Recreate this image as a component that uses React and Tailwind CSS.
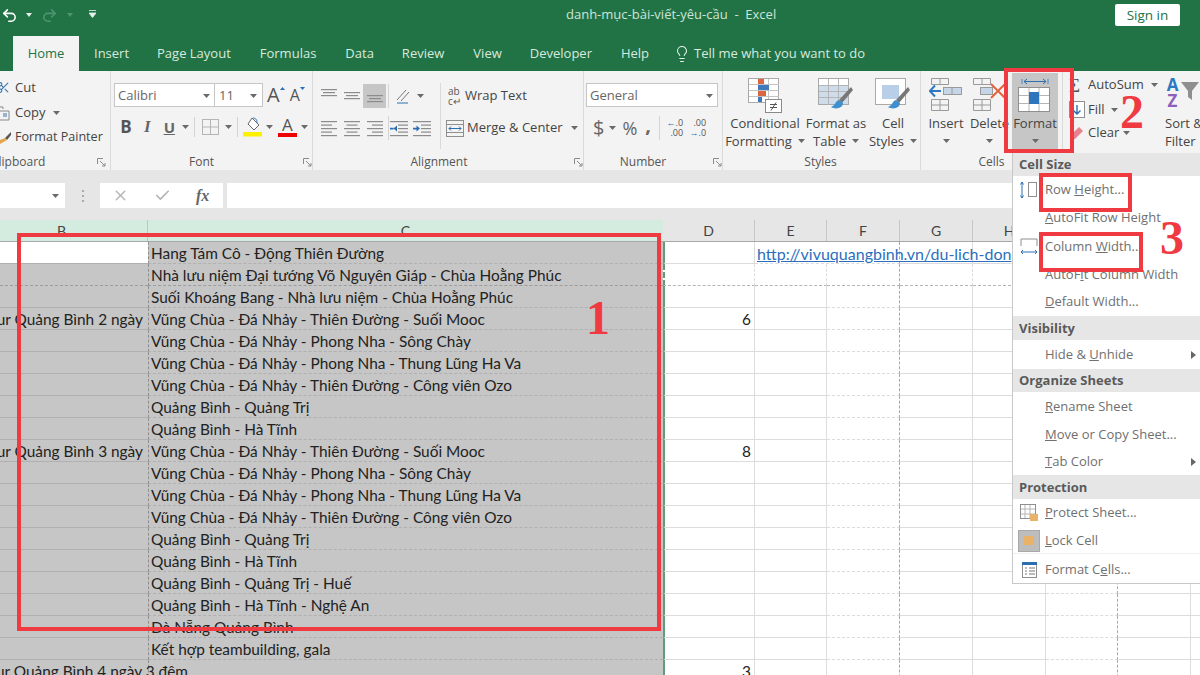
import { Undo2, Redo2, Lightbulb, X, Check, Scissors } from 'lucide-react'

const UI = "font-['Open_Sans',sans-serif]"
const CELL = "font-['Lato',sans-serif]"

const TABS = [
  ['Insert', 'ml-[15px]'], ['Page Layout', 'ml-[28px]'], ['Formulas', 'ml-[29px]'], ['Data', 'ml-[29px]'],
  ['Review', 'ml-[28px]'], ['View', 'ml-[29px]'], ['Developer', 'ml-[28px]'], ['Help', 'ml-[29px]'],
]

const V1 = 'Vũng Chùa - Đá Nhảy - Thiên Đường - Suối Mooc'
const V2 = 'Vũng Chùa - Đá Nhảy - Phong Nha - Sông Chày'
const V3 = 'Vũng Chùa - Đá Nhảy - Phong Nha - Thung Lũng Ha Va'
const V4 = 'Vũng Chùa - Đá Nhảy - Thiên Đường - Công viên Ozo'

const ROWS = [
  { c: 'Hang Tám Cô - Động Thiên Đường', link: true },
  { c: 'Nhà lưu niệm Đại tướng Võ Nguyên Giáp - Chùa Hoằng Phúc', dashed: true },
  { c: 'Suối Khoáng Bang - Nhà lưu niệm - Chùa Hoằng Phúc' },
  { b: 'Tour Quảng Bình 2 ngày', c: V1, d: 6 },
  { c: V2 }, { c: V3 }, { c: V4 },
  { c: 'Quảng Bình - Quảng Trị' },
  { c: 'Quảng Bình - Hà Tĩnh' },
  { b: 'Tour Quảng Bình 3 ngày', c: V1, d: 8 },
  { c: V2 }, { c: V3 }, { c: V4 },
  { c: 'Quảng Bình - Quảng Trị' },
  { c: 'Quảng Bình - Hà Tĩnh' },
  { c: 'Quảng Bình - Quảng Trị - Huế' },
  { c: 'Quảng Bình - Hà Tĩnh - Nghệ An' },
  { c: 'Đà Nẵng Quảng Bình' },
  { c: 'Kết hợp teambuilding, gala' },
  { b: 'Tour Quảng Bình 4 ngày 3 đêm', c: '', d: 3, spill: true },
]

function Caret({ className = '' }) {
  return (
    <svg width="7" height="4" viewBox="0 0 7 4" className={`shrink-0 ${className}`}>
      <path d="M0 0h7L3.5 4z" fill="#6a6a6a" />
    </svg>
  )
}

function Launcher({ className }) {
  return (
    <svg width="9" height="9" viewBox="0 0 9 9" className={`absolute bottom-[3px] ${className}`} fill="none" stroke="#8a8a8a">
      <path d="M.5 6V.5H6M3 3l5 5M5 8h3V5" />
    </svg>
  )
}

function Sep({ className = '' }) {
  return <div className={`w-px h-[24px] bg-[#d4d4d4] shrink-0 ${className}`} />
}

function Lines({ kind }) {
  const rows = {
    left: [[0, 16], [0, 11], [0, 16], [0, 11], [0, 16]],
    center: [[0, 16], [2.5, 11], [0, 16], [2.5, 11], [0, 16]],
    right: [[0, 16], [5, 11], [0, 16], [5, 11], [0, 16]],
  }[kind]
  return (
    <svg width="16" height="17" viewBox="0 0 16 17">
      {rows.map(([x, w], i) => <rect key={i} x={x} y={i * 3.5 + 1} width={w} height="1.2" fill="#8c8c8c" />)}
    </svg>
  )
}

function VAlign({ y }) {
  return (
    <svg width="16" height="16" viewBox="0 0 16 16">
      <rect x="0" y={y} width="16" height="1.2" fill="#8c8c8c" />
      <rect x="2" y={y + 3} width="12" height="1.2" fill="#8c8c8c" />
      <rect x="0" y={y + 6} width="16" height="1.2" fill="#8c8c8c" />
    </svg>
  )
}

function Indent({ flip }) {
  return (
    <svg width="18" height="17" viewBox="0 0 18 17">
      {[1, 4.5, 8, 11.5, 15].map((y, i) => <rect key={i} x={i === 0 || i === 4 ? 0 : 8} y={y} width={i === 0 || i === 4 ? 18 : 10} height="1.2" fill="#8c8c8c" />)}
      <path d={flip ? 'M7 5.5L3.5 8.5 7 11.5zM3.5 7.8H0v1.6h3.5' : 'M3.5 5.5L7 8.5 3.5 11.5zM3.5 7.8H0v1.6h3.5'} fill="#2b6fb3" />
    </svg>
  )
}

function BigIcon({ kind }) {
  if (kind === 'cond') {
    return (
      <svg width="34" height="36" viewBox="0 0 34 36">
        <rect x=".5" y=".5" width="30" height="24" fill="#fff" stroke="#a9a9a9" />
        <path d="M10.5 1v24M20.5 1v24M1 6.5h30M1 12.5h30M1 18.5h30" stroke="#c4c4c4" />
        <rect x="10" y="1" width="6" height="5" fill="#d9663f" />
        <rect x="10" y="7" width="11" height="5" fill="#3f78bd" />
        <rect x="10" y="13" width="8" height="5" fill="#d9663f" />
        <rect x="10" y="19" width="4" height="5" fill="#3f78bd" />
        <rect x="17.5" y="21.5" width="16" height="13" fill="#fff" stroke="#8a8a8a" />
        <path d="M22 26.5h7M22 29.5h7M28 24.5l-5 8" stroke="#555" />
      </svg>
    )
  }
  if (kind === 'table') {
    return (
      <svg width="36" height="34" viewBox="0 0 36 34">
        <rect x=".5" y=".5" width="30" height="26" fill="#cfdcec" stroke="#a9a9a9" />
        <rect x="1" y="1" width="29" height="6" fill="#fff" />
        <path d="M10.5 1v26M20.5 1v26M1 7.5h30M1 13.5h30M1 19.5h30" stroke="#b5b5b5" />
        <path d="M33 9L21 22l3 3L35 12z" fill="#777" />
        <path d="M21 22c-4 1-3 5-8 7 5 3 12 1 12-4z" fill="#3f8ed0" />
      </svg>
    )
  }
  if (kind === 'style') {
    return (
      <svg width="36" height="34" viewBox="0 0 36 34">
        <rect x=".5" y=".5" width="30" height="26" fill="#fff" stroke="#a9a9a9" />
        <rect x="7" y="7" width="17" height="14" fill="#b9cfe8" />
        <path d="M33 9L21 22l3 3L35 12z" fill="#777" />
        <path d="M21 22c-4 1-3 5-8 7 5 3 12 1 12-4z" fill="#3f8ed0" />
      </svg>
    )
  }
  if (kind === 'insert') {
    return (
      <svg width="34" height="34" viewBox="0 0 34 34" fill="none">
        <path d="M2.5.5h17v6h-17zM11 .5v6M2.5 21.5h17v11h-17zM2.5 27h17M11 21.5v11" stroke="#9a9a9a" />
        <rect x="14.5" y="9.5" width="18" height="7" fill="#c5d6e8" stroke="#9a9a9a" />
        <path d="M23 10v6" stroke="#9a9a9a" />
        <path d="M12 13H1M6 7.5L.8 13 6 18.5" stroke="#2b79c2" strokeWidth="2" />
      </svg>
    )
  }
  if (kind === 'delete') {
    return (
      <svg width="34" height="34" viewBox="0 0 34 34" fill="none">
        <path d="M.5.5h17v6H.5zM9 .5v6M.5 21.5h17v11H.5zM.5 27h17M9 21.5v11" stroke="#9a9a9a" />
        <rect x="7.5" y="9.5" width="12" height="7" fill="#c5d6e8" stroke="#9a9a9a" />
        <path d="M18 6l14 14M32 6L18 20" stroke="#e0643c" strokeWidth="2" />
      </svg>
    )
  }
  return (
    <svg width="34" height="36" viewBox="0 0 34 36" fill="none">
      <path d="M4 1v5M30 1v5" stroke="#4a86c5" />
      <path d="M6 3.5h22M9 1l-3 2.500 3 2.500M25 1l3 2.500-3 2.500" stroke="#2b6fb3" />
      <rect x=".5" y="9.500" width="31" height="24" fill="#fff" stroke="#8f8f8f" />
      <path d="M11 10v23M21 10v23M1 17.500h30M1 25.500h30" stroke="#b5b5b5" />
      <rect x="11" y="14" width="10" height="12" fill="#2f75bd" />
    </svg>
  )
}

function BigButton({ icon, first, second, className = '' }) {
  return (
    <div className={`flex flex-col items-center shrink-0 ${className}`}>
      <div className="h-[43px] pt-[7px] flex justify-center"><BigIcon kind={icon} /></div>
      <div className="leading-[18px] whitespace-nowrap">{first}</div>
      <div className="leading-[18px] h-[18px] whitespace-nowrap flex items-center gap-[6px]">
        {second}
        <Caret />
      </div>
    </div>
  )
}

function Group({ label, width, children, launcher, labelClass = '' }) {
  return (
    <div className={`relative flex flex-col shrink-0 h-full border-r border-[#dadada] ${width}`}>
      <div className="flex-1 min-h-0">{children}</div>
      <div className={`h-[20px] leading-[24px] text-center text-[12px] text-[#555] ${labelClass}`}>{label}</div>
      {launcher && <Launcher className={launcher} />}
    </div>
  )
}

function MenuHeader({ children, className }) {
  return <div className={`flex items-center pl-[6px] bg-[#e6e6e6] font-bold text-[#5a5a5a] text-[13px] ${className}`}>{children}</div>
}

function MenuItem({ children, icon, arrow, className }) {
  return (
    <div className={`flex items-center text-[#707070] text-[13px] ${className}`}>
      <div className="w-[32px] flex justify-center shrink-0">{icon}</div>
      <div className="flex-1 whitespace-nowrap">{children}</div>
      {arrow && (
        <svg width="5" height="8" viewBox="0 0 5 8" className="mr-[4px]"><path d="M0 0l5 4-5 4z" fill="#666" /></svg>
      )}
    </div>
  )
}

function SheetRow({ row, index }) {
  const selected = index > 0
  const bBg = selected ? 'bg-[#c6c6c6]' : 'bg-white'
  const line = row.dashed ? 'border-b border-dashed border-b-[#9c9c9c]' : 'border-b border-b-[#b0b0b0]'
  const right = row.dashed ? 'border-b border-dashed border-b-[#b5b5b5]' : 'border-b border-b-[#dcdcdc]'
  return (
    <div className={`flex h-[22px] shrink-0 text-[15.4px] text-[#222] ${CELL}`}>
      <div className={`w-[148px] shrink-0 flex justify-end items-center pt-[2px] whitespace-nowrap ${bBg} ${line} ${row.spill ? '' : 'pr-[5px]'}`}>
        <span className={row.spill ? 'relative left-[40px]' : ''}>{row.b}</span>
      </div>
      <div className={`w-[515px] shrink-0 flex items-center pt-[2px] pl-[2px] whitespace-nowrap bg-[#c6c6c6] border-l border-dashed border-l-[#8f8f8f] ${line}`}>{row.c}</div>
      <div className={`w-[92px] shrink-0 flex justify-end items-center pt-[2px] pr-[3px] bg-white border-l-2 border-l-[#5f9c7c] border-r border-r-[#dcdcdc] ${right}`}>{row.d}</div>
      {row.link ? (
        <div className={`w-[145px] shrink-0 bg-white border-r border-dashed border-r-[#a8a8a8] ${right} flex items-center pt-[2px]`}>
          <span className="pl-[2px] underline text-[16px] text-[#2b6fbd] whitespace-nowrap relative">http://vivuquangbinh.vn/du-lich-don</span>
        </div>
      ) : (
        <>
          <div className={`w-[72px] shrink-0 bg-white border-r border-r-[#dcdcdc] ${right}`} />
          <div className={`w-[73px] shrink-0 bg-white border-r border-dashed border-r-[#a8a8a8] ${right}`} />
        </>
      )}
      <div className={`w-[73px] shrink-0 bg-white border-r border-r-[#dcdcdc] ${right}`} />
      <div className={`w-[73px] shrink-0 bg-white border-r border-r-[#dcdcdc] ${right}`} />
      <div className={`w-[72px] shrink-0 bg-white border-r border-dashed border-r-[#a8a8a8] ${right}`} />
      <div className={`w-[73px] shrink-0 bg-white border-r border-r-[#dcdcdc] ${right}`} />
      <div className={`flex-1 bg-white ${right}`} />
    </div>
  )
}

export default function App() {
  return (
    <div className={`relative w-[1200px] h-[675px] overflow-hidden bg-white ${UI}`}>
      {/* title bar + tabs */}
      <div className="h-[71px] bg-[#217346] flex flex-col">
        <div className="h-[36px] flex items-center pb-[6px]">
          <Undo2 size={17} strokeWidth={2.2} className="text-white ml-[1px]" />
          <svg width="6" height="4" viewBox="0 0 6 4" className="ml-[8px]"><path d="M0 0h6L3 4z" fill="#e8f1ec" /></svg>
          <Redo2 size={17} strokeWidth={2.2} className="text-[#4f9470] ml-[9px]" />
          <svg width="6" height="4" viewBox="0 0 6 4" className="ml-[9px]"><path d="M0 0h6L3 4z" fill="#4f9470" /></svg>
          <svg width="7" height="8" viewBox="0 0 7 8" className="ml-[16px] -mt-[3px]"><path d="M0 .5h7M0 3h7L3.500 7.500z" stroke="#e8f1ec" fill="#e8f1ec" strokeWidth=".8" /></svg>
          <div className="ml-[470px] text-[13px] text-[#cfe3d7] whitespace-pre">danh-mục-bài-viết-yêu-cầu  -  Excel</div>
          <div className="ml-auto mr-[20px] w-[65px] h-[22px] bg-white rounded-[2px] flex items-center justify-center text-[13.5px] text-[#217346]">Sign in</div>
        </div>
        <div className="h-[35px] flex items-center text-[13px] text-[#d8e9df] whitespace-nowrap">
          <div className="ml-[13px] w-[66px] h-full bg-[#f3f3f3] text-[#217346] flex items-center justify-center">Home</div>
          {TABS.map(([name, ml]) => <div key={name} className={ml}>{name}</div>)}
          <Lightbulb size={18} strokeWidth={1.4} className="ml-[24px] text-[#e8f1ec]" />
          <div className="ml-[3px]">Tell me what you want to do</div>
        </div>
      </div>

      {/* ribbon */}
      <div className="h-[99px] bg-[#f3f3f3] flex text-[13px] text-[#444] whitespace-nowrap">
        <Group label={<span className="relative -left-[33px]">lipboard</span>} width="w-[111px]" launcher="left-[97px]">
          <div className="pt-[4px] flex flex-col">
            <div className="h-[25px] flex items-center"><Scissors size={13} className="ml-[-3px] mr-[5px] text-[#3a76b0]" />Cut</div>
            <div className="h-[25px] flex items-center">
              <svg width="10" height="16" viewBox="0 0 10 16" fill="none" className="mr-[5px]"><path d="M0 2h3v2M0 6h9v9H0" stroke="#8a8a8a" /><path d="M3 9h4M3 11h4" stroke="#3a76b0" /></svg>
              Copy<Caret className="ml-[8px]" />
            </div>
            <div className="h-[25px] flex items-center text-[12.6px]">
              <svg width="11" height="14" viewBox="0 0 11 14" className="mr-[4px]"><path d="M11 1L5 7l2 2 4-5z" fill="#555" /><path d="M5 7l-5 2v4l7-4z" fill="#e5a64b" /></svg>
              Format Painter
            </div>
          </div>
        </Group>

        <Group label="Font" labelClass="pr-[20px]" width="w-[202px]" launcher="left-[192px]">
          <div className="pl-[3px] pt-[12px] flex items-center">
            <div className="w-[101px] h-[24px] pt-[2px] bg-white border border-[#c6c6c6] flex items-center px-[3px] text-[#666]">Calibri<Caret className="ml-auto mr-[1px]" /></div>
            <div className="w-[48px] h-[24px] pt-[2px] bg-white border border-l-0 border-[#c6c6c6] flex items-center px-[4px] text-[#666]">11<Caret className="ml-auto mr-[1px]" /></div>
            <span className="ml-[4px] text-[20px] leading-none text-[#555]">A</span>
            <svg width="5" height="3" viewBox="0 0 5 3" className="-mt-[14px]"><path d="M0 3h5L2.500 0z" fill="#2b6fb3" /></svg>
            <span className="ml-[5px] text-[16px] leading-none text-[#555]">A</span>
            <svg width="5" height="3" viewBox="0 0 5 3" className="-mt-[14px]"><path d="M0 0h5L2.500 3z" fill="#2b6fb3" /></svg>
          </div>
          <div className="mt-[11px] pl-[8px] flex items-center h-[18px]">
            <span className="w-[14px] text-center font-bold text-[17px] text-[#555]">B</span>
            <span className="ml-[11px] font-['Liberation_Serif',serif] italic font-bold text-[17px] text-[#666]">I</span>
            <span className="ml-[13px] underline font-bold text-[15px] text-[#666]">U</span>
            <Caret className="ml-[7px]" />
            <Sep className="ml-[5px] !h-[20px]" />
            <svg width="17" height="16" viewBox="0 0 17 16" fill="none" className="ml-[7px]"><rect x=".5" y=".5" width="16" height="15" stroke="#b5b5b5" /><path d="M8.500 0v16M0 8h17" stroke="#b5b5b5" /></svg>
            <Caret className="ml-[6px]" />
            <Sep className="ml-[5px] !h-[20px]" />
            <svg width="19" height="20" viewBox="0 0 19 20" className="ml-[5px]"><path d="M9 1l7 7-5 5-6-6z" fill="#fff" stroke="#666" /><path d="M10 1c2 0 4 1 4 5" stroke="#2b6fb3" fill="none" /><rect y="15" width="19" height="4.500" fill="#fbf100" /></svg>
            <Caret className="ml-[4px]" />
            <div className="ml-[5px] w-[19px] flex flex-col items-center">
              <span className="text-[17px] leading-[16px] text-[#555]">A</span>
              <div className="w-[19px] h-[4px] bg-[#ef0000]" />
            </div>
            <Caret className="ml-[4px]" />
          </div>
        </Group>

        <Group label="Alignment" labelClass="pr-[18px]" width="w-[271px]" launcher="left-[261px]">
          <div className="flex h-full">
            <div className="w-[128px] border-r border-[#dadada] h-[66px] mt-[12px] pl-[4px]">
              <div className="flex items-center h-[26px]">
                <div className="w-[23px] flex justify-center"><VAlign y={1} /></div>
                <div className="w-[23px] flex justify-center"><VAlign y={4} /></div>
                <div className="w-[23px] h-[24px] bg-[#c6c6c6] flex items-center justify-center"><VAlign y={7} /></div>
                <Sep className="ml-[2px]" />
                <svg width="17" height="16" viewBox="0 0 17 16" fill="none" className="ml-[6px]"><path d="M2 12L11 2M6 13L14 4" stroke="#777" /><path d="M2 15h11" stroke="#2b6fb3" /></svg>
                <Caret className="ml-[5px]" />
              </div>
              <div className="flex items-center h-[26px] mt-[6px]">
                <div className="w-[23px] flex justify-center"><Lines kind="left" /></div>
                <div className="w-[23px] flex justify-center"><Lines kind="center" /></div>
                <div className="w-[23px] flex justify-center"><Lines kind="right" /></div>
                <Sep className="ml-[2px]" />
                <div className="ml-[1px]"><Indent flip /></div>
                <div className="ml-[5px]"><Indent /></div>
              </div>
            </div>
            <div className="pl-[5px] pt-[12px]">
              <div className="flex items-center h-[26px] pl-[2px]">
                <span className="w-[14px] leading-[10px] text-[10px] text-[#555] whitespace-normal">ab c↵</span>
                <span className="ml-[3px]">Wrap Text</span>
              </div>
              <div className="flex items-center h-[26px] mt-[6px]">
                <svg width="18" height="17" viewBox="0 0 18 17" fill="none"><rect x=".5" y=".5" width="17" height="16" stroke="#8f8f8f" /><path d="M0 4.500h18M0 12.500h18" stroke="#8f8f8f" /><path d="M3 8.500h12M5 6.500l-2 2 2 2M13 6.500l2 2-2 2" stroke="#2b6fb3" /></svg>
                <span className="ml-[3px]">Merge &amp; Center</span>
                <Caret className="ml-[8px]" />
              </div>
            </div>
          </div>
        </Group>

        <Group label="Number" labelClass="pr-[20px]" width="w-[139px]" launcher="left-[129px]">
          <div className="pl-[2px] pt-[12px]">
            <div className="w-[132px] h-[24px] pt-[2px] bg-white border border-[#c6c6c6] flex items-center px-[3px] text-[#666]">General<Caret className="ml-auto mr-[1px]" /></div>
          </div>
          <div className="mt-[10px] pl-[9px] flex items-center h-[22px]">
            <span className="text-[20px] text-[#666]">$</span>
            <Caret className="ml-[5px]" />
            <span className="ml-[6px] text-[18px] text-[#666]">%</span>
            <span className="ml-[8px] font-bold text-[20px] leading-none -mt-[6px] text-[#666]">,</span>
            <Sep className="ml-[8px]" />
            <div className="ml-[5px] w-[18px] text-[9px] leading-[10px] text-[#555] text-right"><span className="text-[#2b6fb3]">←</span>.0<br />.00</div>
            <div className="ml-[5px] w-[18px] text-[9px] leading-[10px] text-[#555] text-right">.00<br /><span className="text-[#2b6fb3]">→</span>.0</div>
          </div>
        </Group>

        <Group label="Styles" labelClass="pr-[2px]" width="w-[198px]">
          <div className="flex pl-[3px]">
            <BigButton icon="cond" first="Conditional" second="Formatting" className="w-[78px]" />
            <BigButton icon="table" first="Format as" second="Table" className="w-[64px]" />
            <BigButton icon="style" first="Cell" second="Styles" className="w-[50px]" />
          </div>
        </Group>

        <Group label="Cells" width="w-[142px]">
          <div className="flex pl-[3px]">
            <BigButton icon="insert" first="Insert" second="" className="w-[44px]" />
            <BigButton icon="delete" first="Delete" second="" className="w-[43px]" />
            <div className="ml-[1px] w-[46px] h-[77px] mt-[2px] -mb-[2px] bg-[#c6c6c6]">
              <BigButton icon="format" first="Format" second="" className="w-[46px] -mt-[2px]" />
            </div>
          </div>
        </Group>

        <div className="flex-1 flex">
          <div className="pt-[2px] pl-[6px] w-[102px] shrink-0">
            <div className="h-[24px] flex items-center">
              <span className="w-[14px] text-[19px] leading-none text-[#555] font-['Liberation_Serif',serif]">Σ</span>
              <span className="ml-[5px]">AutoSum</span><Caret className="ml-[7px]" />
            </div>
            <div className="h-[24px] pt-[1px] flex items-center">
              <svg width="16" height="17" viewBox="0 0 16 17" fill="none"><rect x=".5" y=".5" width="15" height="16" fill="#fff" stroke="#8f8f8f" /><path d="M8 4v9M4.500 9.500L8 13l3.500-3.500" stroke="#2b6fb3" strokeWidth="1.400" /></svg>
              <span className="ml-[3px]">Fill</span><Caret className="ml-[6px]" />
            </div>
            <div className="h-[24px] flex items-center">
              <svg width="15" height="15" viewBox="0 0 15 15"><path d="M10 1l4 4-8 8-5 1 1-5z" fill="#e9808f" /></svg>
              <span className="ml-[4px]">Clear</span><Caret className="ml-[4px]" />
            </div>
          </div>
          <div className="flex flex-col">
            <div className="h-[43px] pt-[6px] flex">
              <div className="w-[15px] text-[17px] leading-[16px] font-bold text-center"><span className="text-[#2b79c2]">A</span><br /><span className="text-[#8e5fbb]">Z</span></div>
              <svg width="20" height="20" viewBox="0 0 20 20" className="mt-[4px]"><path d="M1 1h18l-7 9v9l-4-3v-6z" fill="#8f8f8f" /></svg>
            </div>
            <div className="leading-[18px]">Sort &amp;</div>
            <div className="leading-[18px] flex items-center gap-[5px]">Filter<Caret /></div>
          </div>
        </div>
      </div>

      {/* formula bar */}
      <div className="h-[50px] bg-[#e6e6e6] flex items-start pt-[13px]">
        <div className="w-[65px] h-[25px] bg-white flex items-center justify-end pr-[6px]"><Caret /></div>
        <div className="w-[35px] h-[25px] flex flex-col items-center justify-center gap-[3px]">
          <div className="w-[2px] h-[2px] bg-[#aaa]" /><div className="w-[2px] h-[2px] bg-[#aaa]" /><div className="w-[2px] h-[2px] bg-[#aaa]" />
        </div>
        <div className="w-[123px] h-[25px] bg-white flex items-center">
          <X size={17} strokeWidth={2} className="ml-[12px] text-[#b5b5b5]" />
          <Check size={17} strokeWidth={2.4} className="ml-[25px] text-[#b5b5b5]" />
          <span className="ml-[25px] font-['Liberation_Serif',serif] italic font-bold text-[16px] text-[#666]">fx</span>
        </div>
        <div className="ml-[4px] flex-1 h-[25px] bg-white" />
      </div>

      {/* column headers */}
      <div className={`h-[22px] flex text-[14px] text-[#444] border-b border-[#a8a8a8] ${CELL}`}>
        <div className="w-[148px] bg-[#d3ecdf] text-center border-r border-[#b8c9bf] pr-[24px]">B</div>
        <div className="w-[515px] bg-[#d3ecdf] text-center">C</div>
        {[['D', 'w-[92px]'], ['E', 'w-[72px]'], ['F', 'w-[73px]'], ['G', 'w-[73px]'], ['H', 'w-[73px]'], ['I', 'w-[72px]'], ['J', 'w-[73px]']].map(([n, w]) => (
          <div key={n} className={`${w} bg-[#e6e6e6] text-center border-r border-[#c6c6c6]`}>{n}</div>
        ))}
        <div className="flex-1 bg-[#e6e6e6]" />
      </div>

      {/* sheet */}
      <div className="flex flex-col">
        {ROWS.map((row, i) => <SheetRow key={i} row={row} index={i} />)}
      </div>

      {/* Format dropdown */}
      <div className="absolute left-[1012px] top-[153px] w-[188px] h-[431px] bg-white border-l border-b border-[#c8c8c8] flex flex-col whitespace-nowrap">
        <MenuHeader className="h-[23px] pt-[1px]">Cell Size</MenuHeader>
        <MenuItem className="h-[28px]" icon={
          <svg width="18" height="18" viewBox="0 0 18 18" fill="none"><rect x="8.500" y="1.500" width="8" height="14" stroke="#8f8f8f" /><path d="M2 1v16M.5 3.500L2 1l1.500 2.500M.5 14.500L2 17l1.500-2.500" stroke="#2b6fb3" /></svg>
        }>Row <u>H</u>eight...</MenuItem>
        <MenuItem className="h-[28px]"><u>A</u>utoFit Row Height</MenuItem>
        <MenuItem className="h-[29px]" icon={
          <svg width="18" height="18" viewBox="0 0 18 18" fill="none"><path d="M1 8V1h16v7" stroke="#8f8f8f" /><path d="M1 14h16M3 12l-2 2 2 2M15 12l2 2-2 2" stroke="#2b6fb3" /></svg>
        }>Column <u>W</u>idth...</MenuItem>
        <MenuItem className="h-[27px]">AutoF<u>i</u>t Column Width</MenuItem>
        <MenuItem className="h-[28px]"><u>D</u>efault Width...</MenuItem>
        <MenuHeader className="h-[24px] pt-[1px]">Visibility</MenuHeader>
        <MenuItem className="h-[29px]" arrow>Hide &amp; <u>U</u>nhide</MenuItem>
        <MenuHeader className="h-[23px]">Organize Sheets</MenuHeader>
        <MenuItem className="h-[29px]"><u>R</u>ename Sheet</MenuItem>
        <MenuItem className="h-[27px]"><u>M</u>ove or Copy Sheet...</MenuItem>
        <MenuItem className="h-[27px]" arrow><u>T</u>ab Color</MenuItem>
        <MenuHeader className="h-[24px] pt-[1px]">Protection</MenuHeader>
        <MenuItem className="h-[28px]" icon={
          <svg width="18" height="18" viewBox="0 0 18 18" fill="none"><rect x=".5" y=".5" width="15" height="14" stroke="#8f8f8f" /><path d="M5 1v13M10 1v13M1 5h14M1 10h14" stroke="#b5b5b5" /><rect x="10" y="10" width="8" height="7" fill="#e8b368" /></svg>
        }><u>P</u>rotect Sheet...</MenuItem>
        <MenuItem className="h-[27px]" icon={
          <div className="w-[22px] h-[22px] bg-[#bdbdbd] border border-[#a8a8a8] flex items-center justify-center"><div className="w-[10px] h-[9px] bg-[#e8b368]" /></div>
        }><u>L</u>ock Cell</MenuItem>
        <MenuItem className="h-[30px] pt-[3px] border-t border-[#efefef] -mt-px" icon={
          <svg width="15" height="16" viewBox="0 0 15 16" fill="none"><rect x=".5" y=".5" width="14" height="15" fill="#fff" stroke="#8f8f8f" /><rect x="0" y="0" width="15" height="3" fill="#2b6fb3" /><path d="M3 6h2M7 6h6M3 9h2M7 9h6M3 12h2M7 12h6" stroke="#777" /></svg>
        }>Format C<u>e</u>lls...</MenuItem>
      </div>

      {/* annotations */}
      <div className="absolute left-[17px] top-[233px] w-[644px] h-[398px] border-4 border-[#ef3a42]" />
      <div className="absolute left-[1004px] top-[68px] w-[70px] h-[85px] border-4 border-[#ef3a42]" />
      <div className="absolute left-[1039px] top-[173px] w-[93px] h-[39px] border-4 border-[#ef3a42]" />
      <div className="absolute left-[1039px] top-[232px] w-[104px] h-[40px] border-4 border-[#ef3a42]" />
      <div className="absolute left-[586px] top-[294px] font-['Liberation_Serif',serif] font-bold text-[48px] leading-[48px] text-[#ef3a42]">1</div>
      <div className="absolute left-[1120px] top-[88px] font-['Liberation_Serif',serif] font-bold text-[48px] leading-[48px] text-[#ef3a42]">2</div>
      <div className="absolute left-[1160px] top-[214px] font-['Liberation_Serif',serif] font-bold text-[48px] leading-[48px] text-[#ef3a42]">3</div>
    </div>
  )
}
